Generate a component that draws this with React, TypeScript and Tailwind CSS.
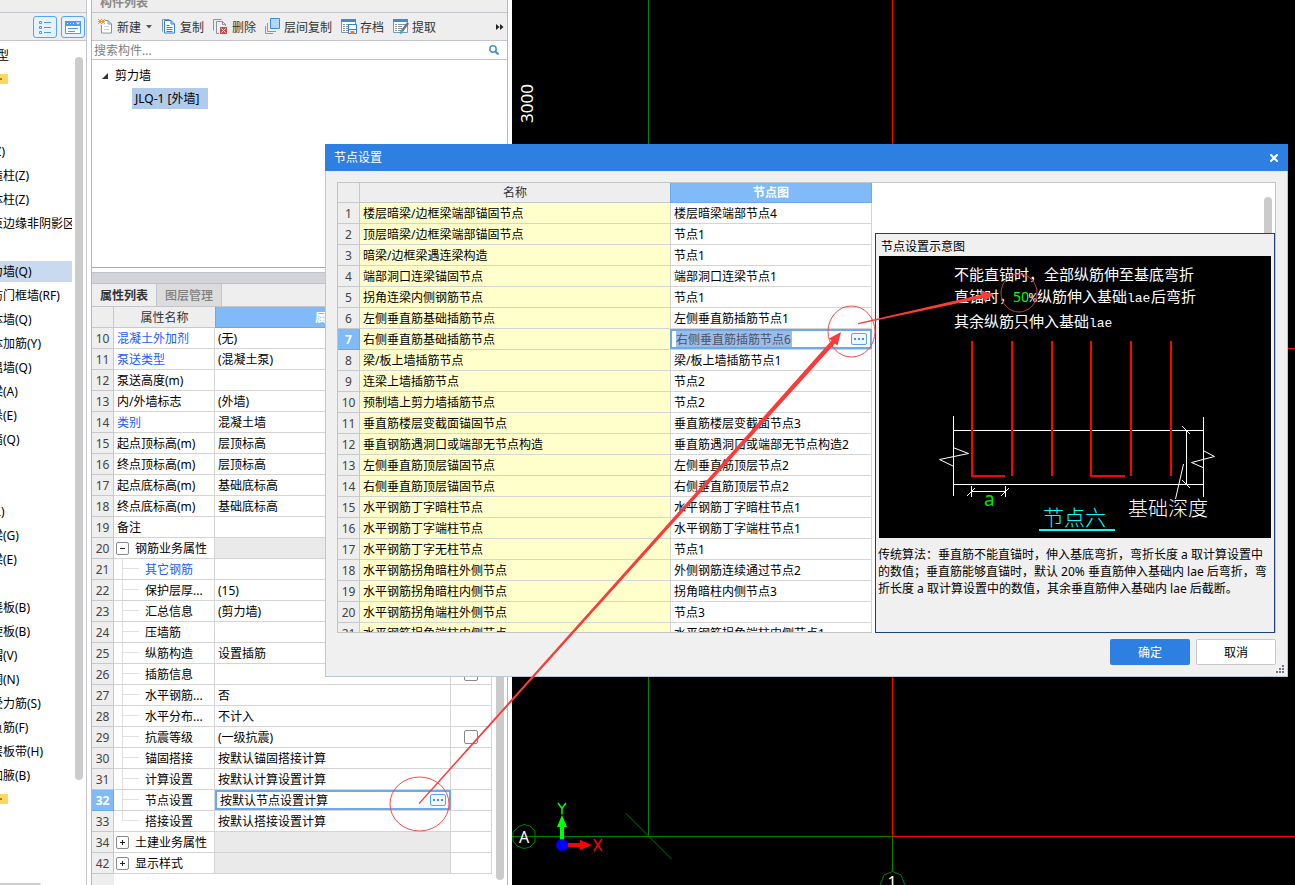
import clsx from "clsx";
import { X } from "lucide-react";

type PropertyRow = {
  no: number;
  name: string;
  value?: string;
  /** "group" rows carry an expander, "child" rows hang off the tree line. */
  kind?: "group" | "child";
  open?: boolean;
  link?: boolean;
  check?: boolean;
  lastChild?: boolean;
};

const propertyRows: PropertyRow[] = [
  { no: 10, name: "混凝土外加剂", value: "(无)", link: true },
  { no: 11, name: "泵送类型", value: "(混凝土泵)", link: true },
  { no: 12, name: "泵送高度(m)" },
  { no: 13, name: "内/外墙标志", value: "(外墙)" },
  { no: 14, name: "类别", value: "混凝土墙", link: true },
  { no: 15, name: "起点顶标高(m)", value: "层顶标高" },
  { no: 16, name: "终点顶标高(m)", value: "层顶标高" },
  { no: 17, name: "起点底标高(m)", value: "基础底标高" },
  { no: 18, name: "终点底标高(m)", value: "基础底标高" },
  { no: 19, name: "备注" },
  { no: 20, name: "钢筋业务属性", kind: "group", open: true },
  { no: 21, name: "其它钢筋", kind: "child", link: true },
  { no: 22, name: "保护层厚...", value: "(15)", kind: "child" },
  { no: 23, name: "汇总信息", value: "(剪力墙)", kind: "child" },
  { no: 24, name: "压墙筋", kind: "child" },
  { no: 25, name: "纵筋构造", value: "设置插筋", kind: "child" },
  { no: 26, name: "插筋信息", kind: "child", check: true },
  { no: 27, name: "水平钢筋...", value: "否", kind: "child" },
  { no: 28, name: "水平分布...", value: "不计入", kind: "child" },
  { no: 29, name: "抗震等级", value: "(一级抗震)", kind: "child", check: true },
  { no: 30, name: "锚固搭接", value: "按默认锚固搭接计算", kind: "child" },
  { no: 31, name: "计算设置", value: "按默认计算设置计算", kind: "child" },
  { no: 32, name: "节点设置", value: "按默认节点设置计算", kind: "child" },
  { no: 33, name: "搭接设置", value: "按默认搭接设置计算", kind: "child", lastChild: true },
  { no: 34, name: "土建业务属性", kind: "group" },
  { no: 42, name: "显示样式", kind: "group" },
];

const nodeRows: [string, string][] = [
  ["楼层暗梁/边框梁端部锚固节点", "楼层暗梁端部节点4"],
  ["顶层暗梁/边框梁端部锚固节点", "节点1"],
  ["暗梁/边框梁遇连梁构造", "节点1"],
  ["端部洞口连梁锚固节点", "端部洞口连梁节点1"],
  ["拐角连梁内侧钢筋节点", "节点1"],
  ["左侧垂直筋基础插筋节点", "左侧垂直筋插筋节点1"],
  ["右侧垂直筋基础插筋节点", "右侧垂直筋插筋节点6"],
  ["梁/板上墙插筋节点", "梁/板上墙插筋节点1"],
  ["连梁上墙插筋节点", "节点2"],
  ["预制墙上剪力墙插筋节点", "节点2"],
  ["垂直筋楼层变截面锚固节点", "垂直筋楼层变截面节点3"],
  ["垂直钢筋遇洞口或端部无节点构造", "垂直筋遇洞口或端部无节点构造2"],
  ["左侧垂直筋顶层锚固节点", "左侧垂直筋顶层节点2"],
  ["右侧垂直筋顶层锚固节点", "右侧垂直筋顶层节点2"],
  ["水平钢筋丁字暗柱节点", "水平钢筋丁字暗柱节点1"],
  ["水平钢筋丁字端柱节点", "水平钢筋丁字端柱节点1"],
  ["水平钢筋丁字无柱节点", "节点1"],
  ["水平钢筋拐角暗柱外侧节点", "外侧钢筋连续通过节点2"],
  ["水平钢筋拐角暗柱内侧节点", "拐角暗柱内侧节点3"],
  ["水平钢筋拐角端柱外侧节点", "节点3"],
  ["水平钢筋拐角端柱内侧节点", "水平钢筋拐角端柱内侧节点1"],
];

// The tree is scrolled sideways, so labels start left of the visible edge.
const treeRows: { text?: string; shift?: "one" | "two" | "type"; tag?: boolean; selected?: boolean }[] = [
  { text: "型", shift: "type" },
  { tag: true },
  {},
  {},
  { text: "柱(Z)", shift: "two" },
  { text: "造柱(Z)" },
  { text: "体柱(Z)" },
  { text: "束边缘非阴影区" },
  {},
  { text: "力墙(Q)", selected: true },
  { text: "防门框墙(RF)" },
  { text: "体墙(Q)" },
  { text: "体加筋(Y)" },
  { text: "温墙(Q)" },
  { text: "梁(A)" },
  { text: "垛(E)" },
  { text: "墙(Q)" },
  {},
  {},
  { text: "梁(L)", shift: "two" },
  { text: "梁(G)" },
  { text: "梁(E)" },
  {},
  { text: "浇板(B)" },
  { text: "旋板(B)" },
  { text: "帽(V)" },
  { text: "洞(N)" },
  { text: "受力筋(S)" },
  { text: "负筋(F)" },
  { text: "层板带(H)" },
  { text: "加腋(B)" },
  { tag: true },
];

const shiftClass = { one: "-ml-[9px]", two: "-ml-[21px]", type: "-ml-[3px]" };

function PageIcon({ x = 3, y = 2, stroke = "#8293a5" }: { x?: number; y?: number; stroke?: string }) {
  return (
    <path
      d={`M${x} ${y}h6.5l3.5 3.5v9h-10z M${x + 6.5} ${y}v3.5h3.5`}
      fill="#fff"
      stroke={stroke}
      strokeWidth="1"
    />
  );
}

function ToolIcon({ name }: { name: string }) {
  return (
    <svg width="16" height="18" viewBox="0 0 16 18" className="shrink-0" aria-hidden="true">
      {name === "new" && (
        <>
          <PageIcon x={3.5} y={2.5} />
          <path d="M6 8.5h5M6 11.5h5M6 14.5h5" stroke="#c9d1d9" />
          <path d="M0 1h7v6H0z" fill="#eee" />
          <path d="M0 1.5h1M3 1.5h1M6 1.5h1M1 2.5h2M4 2.5h2M0 3.5h7M1 4.5h2M4 4.5h2M0 5.5h1M3 5.5h1M6 5.5h1" stroke="#f39a13" />
        </>
      )}
      {name === "copy" && (
        <>
          <path d="M1.5 13.5v-12h7" fill="none" stroke="#8293a5" />
          <PageIcon x={3.5} y={2.5} stroke="#2f7fdc" />
          <path d="M5.5 7.5h3M5.5 9.5h6M5.5 11.5h6M5.5 13.5h6" stroke="#2f7fdc" />
        </>
      )}
      {name === "delete" && (
        <>
          <path d="M0.5 12.5v-11h8" fill="none" stroke="#8293a5" />
          <path d="M6 15.5H3.5v-12h6l3 3V8M9.5 3.5v3h3" fill="none" stroke="#8293a5" />
          <path d="M7 9h7v7H7z" fill="#cf4a4a" />
          <path d="M8.5 10.5l4 4M12.5 10.5l-4 4" stroke="#fff" />
        </>
      )}
      {name === "layer" && (
        <>
          <path d="M0.5 8v7.5h7.5" fill="none" stroke="#f07c24" />
          <path d="M2.5 5v8.5h8.500" fill="none" stroke="#f07c24" />
          <path d="M5.5 0.5h9v10h-9z" fill="#b5d6fb" stroke="#4188dd" />
        </>
      )}
      {(name === "save" || name === "extract") && (
        <>
          <path d="M0.5 2.5h14v12h-14z" fill="#fff" stroke="#8293a5" />
          <path d="M0 1h15v3H0z" fill="#4188dd" />
          <path d="M2 6.5h2M5 6.5h8M2 8.5h2M5 8.5h4M2 10.5h2M5 10.5h4M2 12.5h2M5 12.5h3" stroke="#8293a5" />
        </>
      )}
      {name === "save" && (
        <>
          <path d="M7.5 6.5h8v9h-8z" fill="#fff" stroke="#2f7fdc" />
          <path d="M8 11h7v1H8z" fill="#2f7fdc" />
          <path d="M9.5 13h4v3h-4z" fill="#f07c24" />
        </>
      )}
      {name === "extract" && (
        <>
          <path d="M9 13l6-8" stroke="#6a7580" strokeWidth="2.5" />
          <path d="M7 15.5l2.500-3" stroke="#27b3c4" strokeWidth="2" />
        </>
      )}
    </svg>
  );
}

const tools = [
  { icon: "new", label: "新建", menu: true },
  { icon: "copy", label: "复制" },
  { icon: "delete", label: "删除" },
  { icon: "layer", label: "层间复制" },
  { icon: "save", label: "存档" },
  { icon: "extract", label: "提取" },
];

function MoreButton({ label }: { label: string }) {
  return (
    <button
      type="button"
      aria-label={label}
      className="flex h-3 w-4 shrink-0 items-center justify-center gap-[2px] rounded-[2px] border border-[#5ba3ea] bg-[#f0f6fd]"
    >
      <i className="size-[2px] bg-[#4a90dc]" />
      <i className="size-[2px] bg-[#4a90dc]" />
      <i className="size-[2px] bg-[#4a90dc]" />
    </button>
  );
}

function ModuleTree() {
  return (
    <aside className="flex w-[87px] shrink-0 flex-col overflow-hidden border-r border-[#c3c5ca]">
      <div className="h-[13px] border-b border-[#c3c5ca] bg-[#eee]" />
      <div className="flex h-7 items-center justify-end gap-1 border-b border-[#c3c5ca] bg-[#eee] pr-px">
        <button
          type="button"
          aria-label="列表视图"
          className="flex h-[22px] w-6 items-center justify-center rounded-[3px] border border-[#57a3f3] bg-[#e6f2fe]"
        >
          <svg width="14" height="14" viewBox="0 0 14 14" fill="none" stroke="#4a9bf0">
            <path d="M1.5 1.5h2v2h-2zM1.5 6.5h2v2h-2zM1.5 11.5h2v2h-2zM6 2.5H13M6 7.5H13M6 12.5H13" />
          </svg>
        </button>
        <button
          type="button"
          aria-label="面板视图"
          className="flex h-[22px] w-6 items-center justify-center rounded-[3px] border border-[#57a3f3] bg-[#e6f2fe]"
        >
          <svg width="16" height="14" viewBox="0 0 16 14">
            <path d="M0.5 1.5h15v12h-15z" fill="#fff" stroke="#4a9bf0" />
            <path d="M0 1h16v5H0z" fill="#4a9bf0" />
            <path d="M2 3h1v1H2zM5 3h1v1H5zM8 3h1v1H8zM11 2.5h4l-2 2z" fill="#fff" />
            <path d="M3 8.5h10M3 11.5h7" stroke="#4a9bf0" />
          </svg>
        </button>
      </div>
      <div className="flex flex-1 justify-between pr-[3px]">
        <ul className="w-[72px] overflow-hidden pt-[2px]">
          {treeRows.map((row, i) => (
            <li key={i} className="flex h-6 items-center">
              {row.tag && (
                <span className="flex h-[10px] w-2 items-center bg-[#ffd75e]">
                  <i className="size-[2px] bg-[#a08030]" />
                </span>
              )}
              {row.text && (
                <button
                  type="button"
                  className={clsx(
                    "flex h-[21px] w-full items-center pt-[2px] text-left whitespace-nowrap",
                    row.selected && "bg-[#c9d9f0]",
                  )}
                >
                  <span className={shiftClass[row.shift ?? "one"]}>{row.text}</span>
                </button>
              )}
            </li>
          ))}
        </ul>
        <div className="mt-4 h-[723px] w-2 rounded-full bg-[#cbcbcb]" />
      </div>
      <div className="h-[2px] w-[41px] rounded-tr bg-[#cbcbcb]" />
    </aside>
  );
}

function PropertyName({ row }: { row: PropertyRow }) {
  if (row.kind === "group") {
    return (
      <div className="flex h-5 items-center gap-[6px] pl-[2px]">
        <button
          type="button"
          aria-label={row.open ? "折叠" : "展开"}
          className="flex size-[13px] shrink-0 items-center justify-center rounded-[2px] border border-[#8a8a8a] bg-white"
        >
          <svg width="5" height="5" viewBox="0 0 5 5" stroke="#222">
            <path d={row.open ? "M0 2.5h5" : "M0 2.5h5M2.5 0v5"} />
          </svg>
        </button>
        <span className="pt-[2px]">{row.name}</span>
      </div>
    );
  }
  if (row.kind === "child") {
    return (
      <div className="flex h-5 items-center pl-2">
        <span className="flex h-full w-[17px] flex-col">
          <i className="h-[10px] border-b border-l border-[#e0e0e0]" />
          <i className={clsx("h-[11px]", !row.lastChild && "border-l border-[#e0e0e0]")} />
        </span>
        <span className={clsx("pt-[2px] pl-[6px]", row.link && "text-[#1a5cff]")}>{row.name}</span>
      </div>
    );
  }
  return <div className={clsx("pt-[2px] pl-[3px]", row.link && "text-[#1a5cff]")}>{row.name}</div>;
}

function PropertyTable() {
  return (
    <table className="w-full table-fixed border-separate border-spacing-0">
      <colgroup>
        <col className="w-[22px]" />
        <col className="w-[101px]" />
        <col />
        <col className="w-[41px]" />
      </colgroup>
      <thead>
        <tr className="h-[21px]">
          <th className="border-r border-b border-[#c6c8cb] bg-[#eee] p-0" />
          <th className="border-b border-[#c6c8cb] bg-[#eee] p-0 pt-[2px] font-normal text-[#333]">属性名称</th>
          <th className="border border-t-0 border-[#6aa9ea] bg-[#80baf9] p-0 pt-[2px] font-bold text-white">属性值</th>
          <th className="border-r border-b border-[#c6c8cb] bg-[#eee] p-0" />
        </tr>
      </thead>
      <tbody>
        {propertyRows.map((row) => {
          const active = row.no === 32;
          return (
            <tr key={row.no} className="h-[21px]">
              <td
                className={clsx(
                  "border-r border-b p-0 pt-[2px] text-center",
                  active
                    ? "border-[#6aa9ea] bg-[#80baf9] font-bold text-white"
                    : "border-[#c6c8cb] bg-[#eee] text-[#444]",
                )}
              >
                {row.no}
              </td>
              <td className="overflow-hidden border-r border-b border-[#d4d4d4] p-0 whitespace-nowrap">
                <PropertyName row={row} />
              </td>
              <td
                className={clsx(
                  "border-b border-[#d4d4d4] p-0",
                  !active && "border-r",
                  row.kind === "group" && "bg-[#eaeaea]",
                )}
              >
                {active ? (
                  <div className="flex h-5 items-center border-2 border-[#6aa9ea] pr-[3px] pl-[3px]">
                    <input
                      aria-label={row.name}
                      defaultValue={row.value}
                      className="h-4 min-w-0 flex-1 pt-[2px] outline-none"
                    />
                    <MoreButton label="编辑节点设置" />
                  </div>
                ) : (
                  <div className="pt-[2px] pl-[3px]">{row.value}</div>
                )}
              </td>
              <td className="border-r border-b border-[#d4d4d4] p-0">
                {row.check && (
                  <input
                    type="checkbox"
                    aria-label={row.name}
                    className="mx-auto block size-[14px] appearance-none rounded-[2px] border border-[#888] bg-white"
                  />
                )}
              </td>
            </tr>
          );
        })}
      </tbody>
    </table>
  );
}

function ComponentPanel() {
  return (
    <section className="ml-1 flex w-[417px] shrink-0 flex-col border-x border-[#b4b6ba]">
      <header className="flex h-[13px] items-end overflow-hidden border-b border-[#c3c5ca] bg-[#eee] pb-px pl-2 font-bold text-[#8a8a8a]">
        <h2 className="leading-4">构件列表</h2>
      </header>
      <div className="flex h-7 items-center gap-[9px] border-b border-[#c3c5ca] bg-[#eee] pl-[6px] text-[#333]">
        {tools.map((tool) => (
          <button key={tool.icon} type="button" className="flex items-center gap-[3px] whitespace-nowrap">
            <ToolIcon name={tool.icon} />
            <span className="pt-[2px]">{tool.label}</span>
            {tool.menu && (
              <svg width="8" height="4" viewBox="0 0 8 4">
                <path d="M2 0h6L5 3.500z" fill="#555" />
              </svg>
            )}
          </button>
        ))}
        <button type="button" aria-label="更多" className="mr-[3px] ml-auto">
          <svg width="8" height="6" viewBox="0 0 8 6">
            <path d="M0 0l3.500 3L0 6zM4 0l3.500 3L4 6z" fill="#222" />
          </svg>
        </button>
      </div>
      <div className="flex h-[19px] items-center border-b border-[#c3c5ca] pr-2 pl-[2px]">
        <input
          type="search"
          aria-label="搜索构件"
          placeholder="搜索构件..."
          className="h-[18px] flex-1 pt-[2px] outline-none placeholder:text-[#808080]"
        />
        <svg width="10" height="10" viewBox="0 0 10 10" fill="none" stroke="#3f94cf" strokeWidth="1.5">
          <circle cx="4" cy="4" r="3.2" />
          <path d="M6.5 6.5L9.5 9.5" strokeWidth="2" />
        </svg>
      </div>
      <div className="h-[208px] border-b border-[#a8a8a8] pt-1">
        <div className="flex h-6 items-center gap-[7px] pl-[10px]">
          <svg width="6" height="6" viewBox="0 0 6 6">
            <path d="M6 0v6H0z" fill="#333" />
          </svg>
          剪力墙
        </div>
        <button type="button" className="ml-10 block h-[21px] w-[76px] bg-[#b1cbed] pl-[3px] text-left">
          JLQ-1 [外墙]
        </button>
      </div>
      <div className="mt-1 h-3 border-y border-[#bfc2c8] bg-[#d2d4d9]" />
      <div role="tablist" className="flex h-[23px] border-b border-[#c3c5ca] bg-[#eee]">
        <button
          type="button"
          role="tab"
          aria-selected="true"
          className="border-r border-[#c3c5ca] px-2 pt-[2px] font-bold text-[#333]"
        >
          属性列表
        </button>
        <button
          type="button"
          role="tab"
          aria-selected="false"
          className="border-r border-[#c3c5ca] bg-[#dcdcdc] px-2 pt-[2px] font-medium text-[#808080]"
        >
          图层管理
        </button>
      </div>
      <div className="flex flex-1">
        <div className="flex min-w-0 flex-1 flex-col">
          <PropertyTable />
          <div className="w-[22px] flex-1 bg-[#eee]" />
        </div>
        <div className="mr-[3px] mb-[5px] ml-1 w-2 rounded-full bg-[#cbcbcb]" />
      </div>
    </section>
  );
}

function DrawingCanvas() {
  return (
    <main className="relative ml-1 min-w-0 flex-1 bg-black">
      <svg className="absolute inset-0 size-full" aria-label="轴网">
        <g stroke="#008000" fill="none">
          <path d="M136.5 0V836.5M0 836.5H380.5M380.5 836.5V871M114 813.5L159.5 859" />
          <path d="M7 826.5L12 824.5L18 826L23 831V842L18 847L12 848.5L5 846L1 841V832Z" fill="#000" />
          <path d="M0.5 836.5H24" />
          <path d="M368.5 884L372 875L380.5 871.5L389 875L392.5 884L390 892H371Z" fill="#000" />
        </g>
        <path d="M380.5 0V836.5H4000M700 348.5H4000" stroke="#f00" fill="none" />
        <g fill="#fff">
          <text x="12" y="843" fontSize="16" textAnchor="middle">
            A
          </text>
          <text x="380" y="888" fontSize="16" textAnchor="middle">
            1
          </text>
          <text transform="translate(21 123) rotate(-90)" fontSize="17">
            3000
          </text>
        </g>
        <path d="M50 845V822" stroke="#0f0" strokeWidth="4" />
        <path d="M50 815l5 12H45z" fill="#0f0" />
        <path d="M50 845H72" stroke="#f00" strokeWidth="4" />
        <path d="M80 845l-12-5v10z" fill="#f00" />
        <circle cx="50" cy="845" r="6" fill="#00f" />
        <path d="M46 803l4 5.5L54 803M50 808.5V814.5" stroke="#0f0" strokeWidth="1.5" fill="none" />
        <path d="M82 839l8 12M90 839l-8 12" stroke="#f00" strokeWidth="1.5" fill="none" />
      </svg>
    </main>
  );
}

function NodeDiagram() {
  return (
    <svg viewBox="0 0 392 282" className="block h-auto w-full bg-black" aria-label="节点六">
      <g fill="#fff" fontSize="15">
        <text x="75" y="24">不能直锚时，全部纵筋伸至基底弯折</text>
        <text x="75" y="46">直锚时，</text>
        <text x="134" y="46" fill="#0f0" fontSize="14">50</text>
        <text x="150" y="46" fontFamily="Liberation Mono" fontSize="13">%</text>
        <text x="158" y="46">纵筋伸入基础</text>
        <text x="248" y="46" fontFamily="Liberation Mono" fontSize="13">lae</text>
        <text x="272" y="46">后弯折</text>
        <text x="75" y="71">其余纵筋只伸入基础</text>
        <text x="210" y="71" fontFamily="Liberation Mono" fontSize="13">lae</text>
      </g>
      <g stroke="#fff" fill="none">
        <path d="M74.5 160V240M324.5 161V241M74 174.5H325M74 228.5H325" />
        <path d="M74 191.5L89.5 197.5L60.5 203.5L74 210" />
        <path d="M325 195L335.5 200.5L312.5 206.5L325 212" />
        <path d="M307.5 174V229M303 170L311 178M303 224L311 232M304.5 208L296.5 243" />
        <path d="M92 235.5H127M92.5 230V241M126.5 230V241M88 240L96 232M122 240L130 232" />
      </g>
      <g stroke="#f00" strokeWidth="2" fill="none">
        <path d="M93 85V220H126M133 85V220M173 85V220M212 85V220H246M252 85V220M292 85V220" />
      </g>
      <text x="105" y="250" fill="#00e000" fontSize="19">a</text>
      <text x="164" y="269" fill="#0ff" fontSize="21" fontWeight="300">节点六</text>
      <path d="M160 274H236" stroke="#0ff" strokeWidth="2" />
      <text x="249" y="260" fill="#fff" fontSize="20" fontWeight="300">基础深度</text>
    </svg>
  );
}

function NodeTable() {
  return (
    <table className="w-full table-fixed border-separate border-spacing-0">
      <colgroup>
        <col className="w-[22px]" />
        <col />
        <col className="w-[202px]" />
      </colgroup>
      <thead>
        <tr className="h-5">
          <th className="border-r border-b border-[#c6c8cb] bg-[#eee] p-0" />
          <th className="border-b border-[#c6c8cb] bg-[#eee] p-0 pt-px font-normal text-[#333]">名称</th>
          <th className="border border-t-0 border-[#6aa9ea] bg-[#80baf9] p-0 pt-px font-bold text-white">节点图</th>
        </tr>
      </thead>
      <tbody>
        {nodeRows.map(([name, node], i) => {
          const active = i === 6;
          return (
            <tr key={name} className="h-[21px]">
              <td
                className={clsx(
                  "border-r border-b p-0 pt-[2px] text-center",
                  active
                    ? "border-[#6aa9ea] bg-[#80baf9] font-bold text-white"
                    : "border-[#c6c8cb] bg-[#eee] text-[#444]",
                )}
              >
                {i + 1}
              </td>
              <td className="border-b border-[#d4d4d4] bg-[#ffffcc] p-0 pt-[2px] pl-[3px]">{name}</td>
              <td className={clsx("border-b border-[#d4d4d4] p-0 whitespace-nowrap", !active && "border-x")}>
                {active ? (
                  <div className="flex h-5 items-center justify-between border-2 border-[#6aa9ea] pr-[3px] pl-1">
                    <input
                      aria-label={name}
                      defaultValue={node}
                      className="h-4 w-[116px] bg-[#9abce9] pt-[2px] text-[#4a5568] outline-none"
                    />
                    <MoreButton label="选择节点图" />
                  </div>
                ) : (
                  <div className="pt-[2px] pl-[3px]">{node}</div>
                )}
              </td>
            </tr>
          );
        })}
      </tbody>
    </table>
  );
}

function NodeDialog() {
  return (
    <div
      role="dialog"
      aria-label="节点设置"
      className="absolute top-[144px] right-[7px] left-[325px] bg-[#f0f0f0]"
    >
      <header className="flex h-[27px] items-center justify-between bg-[#2d80e2] pr-2 pl-[9px] text-white">
        <h2 className="pt-px">节点设置</h2>
        <button type="button" aria-label="关闭">
          <X size={12} strokeWidth={4} />
        </button>
      </header>
      <div className="border border-t-0 border-[#b9c7dc] px-[11px] pt-[11px] pb-[11px]">
        <div className="flex h-[451px] border-x border-t border-[#c4c4c4] bg-white">
          <div className="w-[534px] shrink-0 overflow-hidden border-b border-[#c4c4c4]">
            <NodeTable />
          </div>
          <div className="ml-[3px] flex min-w-0 flex-1 flex-col">
            <div className="flex h-[50px] shrink-0 justify-end pt-[14px] pr-[3px]">
              <div className="w-2 rounded-t-full bg-[#cbcbcb]" />
            </div>
            <section className="flex-1 border border-[#1f3f77] bg-[#f0f0f0]">
              <h3 className="h-[22px] pl-[5px] leading-[26px]">节点设置示意图</h3>
              <div className="px-[3px]">
                <NodeDiagram />
              </div>
              <p className="pt-2 pl-[2px] leading-[17px]">
                传统算法：垂直筋不能直锚时，伸入基底弯折，弯折长度 a 取计算设置中的数值；垂直筋能够直锚时，默认 20%
                垂直筋伸入基础内 lae 后弯折，弯折长度 a 取计算设置中的数值，其余垂直筋伸入基础内 lae 后截断。
              </p>
            </section>
          </div>
        </div>
        <footer className="flex justify-end gap-[6px] pt-[6px]">
          <button type="button" className="h-[26px] w-20 rounded-[2px] bg-[#2d80e2] pt-[2px] text-white">
            确定
          </button>
          <button type="button" className="h-[26px] w-20 rounded-[2px] border border-[#c8c8c8] bg-white pt-[2px]">
            取消
          </button>
        </footer>
      </div>
      <svg width="8" height="8" viewBox="0 0 8 8" className="absolute right-1 bottom-1" fill="#6f7885">
        <path d="M6 0h2v2H6zM3 3h2v2H3zM6 3h2v2H6zM0 6h2v2H0zM3 6h2v2H3zM6 6h2v2H6z" />
      </svg>
    </div>
  );
}

/** Red marker strokes leading from the property row to the diagram. */
function Callouts() {
  return (
    <svg className="pointer-events-none absolute inset-0 size-full" aria-hidden="true">
      <g fill="none" stroke="#f34a4a">
        <ellipse cx="419.5" cy="804" rx="29.5" ry="27" />
        <ellipse cx="851.5" cy="331.5" rx="23.5" ry="25.5" />
        <ellipse cx="1019" cy="293" rx="18" ry="19" stroke="#c43c3c" />
      </g>
      <g fill="#fb3b38">
        <path d="M418.5 803.3L831.5 340.5L829 338.5L841 332L837.5 345.5L835 343.5L419.5 804Z" />
        <path d="M858 323L982 294.5L981 291L994 294L984 301.5L983 298L858 324.2Z" />
      </g>
    </svg>
  );
}

export default function App() {
  return (
    <div className="relative flex min-h-screen overflow-hidden bg-white font-['Noto_Sans','Noto_Sans_CJK_SC',sans-serif] text-[12px] leading-[18px] text-black">
      <ModuleTree />
      <ComponentPanel />
      <DrawingCanvas />
      <NodeDialog />
      <Callouts />
    </div>
  );
}
